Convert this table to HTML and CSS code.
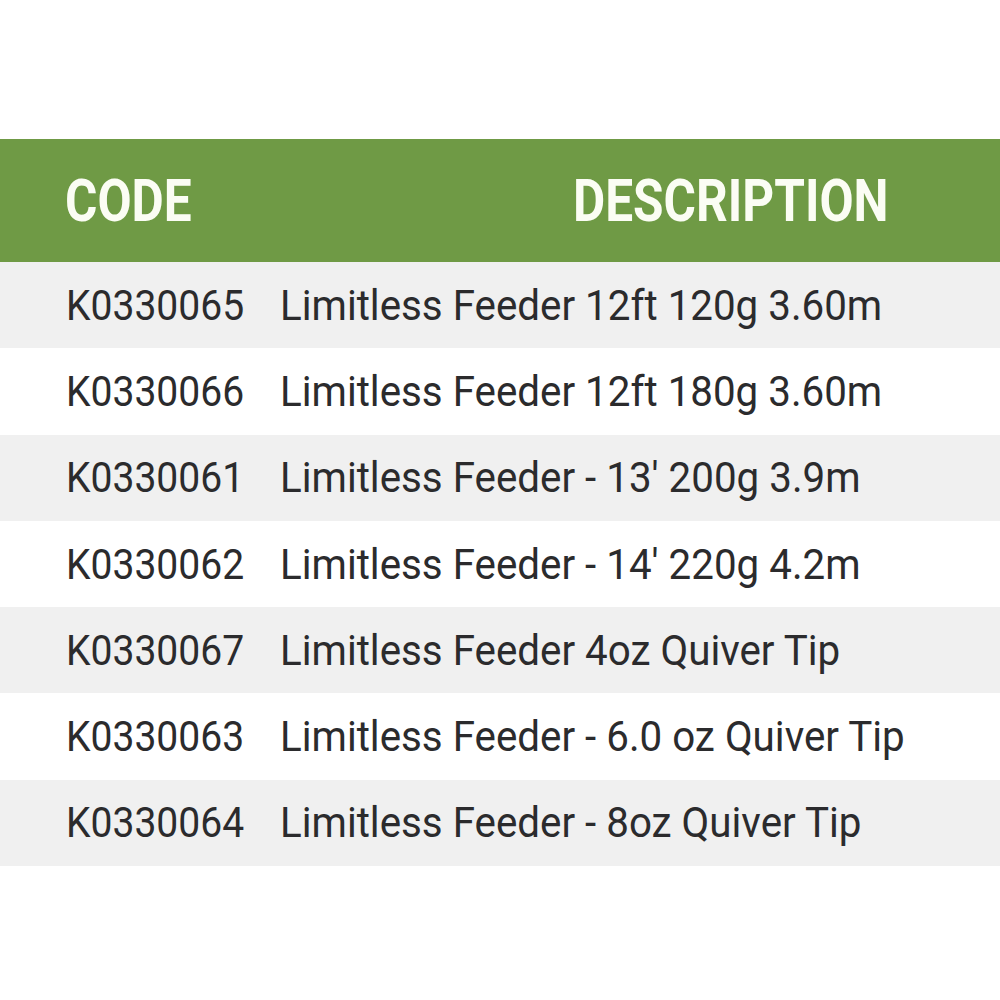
FILE: index.html
```html
<!DOCTYPE html>
<html>
<head>
<meta charset="utf-8">
<link rel="stylesheet" href="styles.css">
</head>
<body>
<div class="table">
  <div class="head">
    <span class="h-code"><span class="sq">CODE</span></span>
    <span class="h-desc"><span class="sq">DESCRIPTION</span></span>
  </div>
  <div class="row alt"><span class="code"><span class="sq">K0330065</span></span><span class="desc"><span class="sq">Limitless Feeder 12ft 120g 3.60m</span></span></div>
  <div class="row"><span class="code"><span class="sq">K0330066</span></span><span class="desc"><span class="sq">Limitless Feeder 12ft 180g 3.60m</span></span></div>
  <div class="row alt"><span class="code"><span class="sq">K0330061</span></span><span class="desc"><span class="sq">Limitless Feeder - 13' 200g 3.9m</span></span></div>
  <div class="row"><span class="code"><span class="sq">K0330062</span></span><span class="desc"><span class="sq">Limitless Feeder - 14' 220g 4.2m</span></span></div>
  <div class="row alt"><span class="code"><span class="sq">K0330067</span></span><span class="desc"><span class="sq">Limitless Feeder 4oz Quiver Tip</span></span></div>
  <div class="row"><span class="code"><span class="sq">K0330063</span></span><span class="desc"><span class="sq">Limitless Feeder - 6.0 oz Quiver Tip</span></span></div>
  <div class="row alt"><span class="code"><span class="sq">K0330064</span></span><span class="desc"><span class="sq">Limitless Feeder - 8oz Quiver Tip</span></span></div>
</div>
</body>
</html>
```

FILE: styles.css
```css
html, body {
  margin: 0;
  padding: 0;
  background: #ffffff;
}
body {
  font-family: Roboto, "Liberation Sans", sans-serif;
}
.table {
  padding-top: 139px;
}
.head {
  height: 123px;
  background: #6f9a45;
  display: flex;
  align-items: center;
  color: #fbfdf4;
  font-weight: 700;
  font-size: 59px;
  white-space: nowrap;
}
.h-code {
  padding-left: 65px;
  width: 508px;
}
.h-desc {
  flex: 1;
}
.sq {
  display: inline-block;
  transform: scaleX(0.84);
  transform-origin: left center;
}
.row {
  height: 86.3px;
  display: flex;
  align-items: center;
  font-size: 42px;
  color: #2b2b2d;
  white-space: nowrap;
}
.row .code .sq {
  transform: scaleX(0.93);
}
.row .desc .sq {
  transform: scaleX(0.96);
}
.row.alt {
  background: #f0f0f0;
}
.code {
  padding-left: 66px;
  width: 214px;
}
.desc {
  flex: 1;
}
```
